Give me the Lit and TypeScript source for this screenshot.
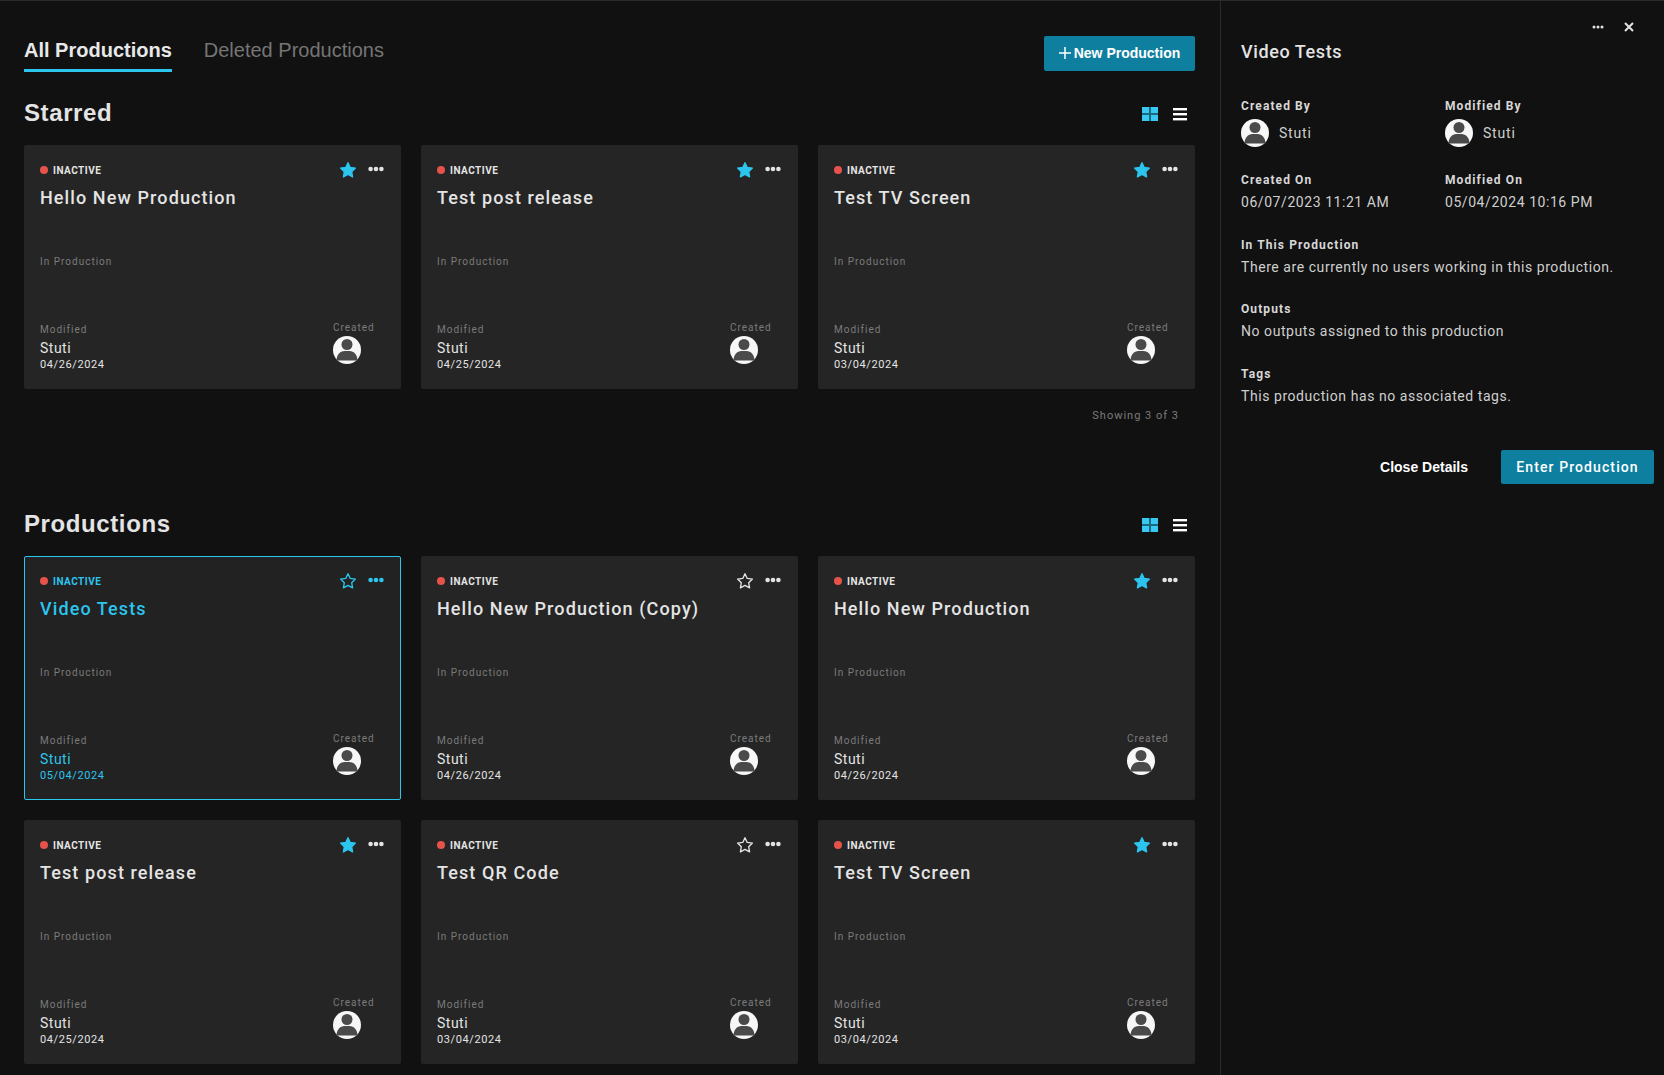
import { LitElement, css, html } from "lit";
import { customElement, property } from "lit/decorators.js";
import { classMap } from "lit/directives/class-map.js";

const starPath =
  "M12 3.2l2.7 5.7 6.2.8-4.5 4.3 1.1 6.2L12 17.2l-5.5 3 1.1-6.2-4.5-4.3 6.2-.8z";

const avatar = html`<svg class="avatar" viewBox="0 0 28 28" aria-hidden="true">
  <circle cx="14" cy="14" r="14" fill="#f7f7f7"></circle>
  <circle cx="14" cy="8.500" r="5.500" fill="#4a4a4a"></circle>
  <path d="M3.500 24.500c0-5.500 3.500-9.500 8-9.500h5c4.500 0 8 4 8 9.500z" fill="#4a4a4a"></path>
</svg>`;

interface Production {
  name: string;
  date: string;
  starred: boolean;
  selected?: boolean;
}

const starred: Production[] = [
  { name: "Hello New Production", date: "04/26/2024", starred: true },
  { name: "Test post release", date: "04/25/2024", starred: true },
  { name: "Test TV Screen", date: "03/04/2024", starred: true },
];

const productions: Production[] = [
  { name: "Video Tests", date: "05/04/2024", starred: false, selected: true },
  { name: "Hello New Production (Copy)", date: "04/26/2024", starred: false },
  { name: "Hello New Production", date: "04/26/2024", starred: true },
  { name: "Test post release", date: "04/25/2024", starred: true },
  { name: "Test QR Code", date: "03/04/2024", starred: false },
  { name: "Test TV Screen", date: "03/04/2024", starred: true },
];

@customElement("production-card")
export class ProductionCard extends LitElement {
  @property({ type: Object }) item!: Production;

  static override styles = css`
    :host {
      display: block;
    }

    .card {
      box-sizing: border-box;
      height: 244px;
      padding: 16px 16px 17px;
      display: flex;
      flex-direction: column;
      background: #252525;
      border-radius: 2px;
      color: #e4e4e4;
    }

    .card.selected {
      padding: 15px 15px 16px;
      background: #222;
      border: 1px solid #2cc5ee;
      color: #2cc5ee;
    }

    .top {
      display: flex;
      align-items: center;
      height: 18px;
    }

    .dot {
      width: 8px;
      height: 8px;
      border-radius: 50%;
      background: #e5534b;
      margin-right: 5px;
    }

    .status {
      font-size: 10px;
      font-weight: 700;
      letter-spacing: 0.5px;
      flex: 1;
    }

    .star {
      width: 20px;
      height: 20px;
      margin-right: 10px;
      fill: none;
      stroke: #e4e4e4;
      stroke-width: 1.600;
      stroke-linejoin: round;
    }

    .selected .star {
      stroke: #2cc5ee;
    }

    .star.on {
      fill: #2cc5ee;
      stroke: #2cc5ee;
    }

    .more {
      width: 16px;
      height: 6px;
      margin: 0 1px 3px 0;
      fill: currentColor;
    }

    .title {
      margin-top: 7px;
      font-size: 18px;
      line-height: 24px;
      font-weight: 500;
      letter-spacing: 1.100px;
    }

    .stage {
      margin-top: 45px;
      font-size: 10px;
      line-height: 14px;
      letter-spacing: 1px;
      color: #7b7b7b;
    }

    .bottom {
      margin-top: auto;
      display: flex;
      justify-content: space-between;
      align-items: flex-end;
    }

    .label {
      font-size: 10px;
      line-height: 14px;
      letter-spacing: 1px;
      color: #7b7b7b;
    }

    .name {
      margin-top: 2px;
      font-size: 14px;
      line-height: 18px;
      letter-spacing: 0.5px;
    }

    .date {
      margin-top: 1px;
      font-size: 11px;
      line-height: 14px;
      letter-spacing: 0.6px;
    }

    .created {
      width: 46px;
      margin-right: 6px;
      margin-bottom: 8px;
    }

    .avatar {
      display: block;
      width: 28px;
      height: 28px;
      margin-top: 1px;
    }
  `;

  override render() {
    const p = this.item;
    return html`<div class=${classMap({ card: true, selected: !!p.selected })}>
      <div class="top">
        <span class="dot"></span>
        <span class="status">INACTIVE</span>
        <svg class=${classMap({ star: true, on: p.starred })} viewBox="0 0 24 24">
          <path d=${starPath}></path>
        </svg>
        <svg class="more" viewBox="0 0 16 6">
          <circle cx="2.600" cy="3" r="2.300"></circle>
          <circle cx="8" cy="3" r="2.300"></circle>
          <circle cx="13.400" cy="3" r="2.300"></circle>
        </svg>
      </div>
      <div class="title">${p.name}</div>
      <div class="stage">In Production</div>
      <div class="bottom">
        <div>
          <div class="label">Modified</div>
          <div class="name">Stuti</div>
          <div class="date">${p.date}</div>
        </div>
        <div class="created">
          <div class="label">Created</div>
          ${avatar}
        </div>
      </div>
    </div>`;
  }
}

@customElement("app-root")
export class AppRoot extends LitElement {
  static override styles = css`
    :host {
      display: block;
      height: 1075px;
      overflow: hidden;
      background: #111;
      color: #e4e4e4;
      font-family: Roboto, "Liberation Sans", sans-serif;
    }

    .page {
      display: flex;
      height: 100%;
      box-sizing: border-box;
      border-top: 1px solid #2a2a2a;
    }

    main {
      box-sizing: border-box;
      width: 1220px;
      flex: none;
      padding: 0 25px 0 24px;
    }

    .tabs {
      display: flex;
      align-items: flex-start;
      padding-top: 35px;
      height: 71px;
      box-sizing: border-box;
    }

    .tab {
      height: 36px;
      margin-right: 32px;
      font-family: "Liberation Sans", sans-serif;
      font-size: 20px;
      line-height: 28px;
      color: #757575;
      box-sizing: border-box;
    }

    .tab.active {
      font-weight: 700;
      color: #e8e8e8;
      border-bottom: 3px solid #2cc5ee;
    }

    .new {
      margin-left: auto;
    }

    .btn {
      display: flex;
      align-items: center;
      justify-content: center;
      border: 0;
      border-radius: 2px;
      background: #0f7f9f;
      color: #fff;
      font: 500 14px Roboto, sans-serif;
    }

    .new.btn {
      width: 151px;
      height: 35px;
      padding: 0 0 2px;
      font: 700 14px "Liberation Sans", sans-serif;
    }

    .new svg {
      width: 12px;
      height: 12px;
      margin-right: 3px;
      stroke: #fff;
      stroke-width: 1.500;
    }

    .head {
      display: flex;
      align-items: center;
      height: 32px;
      margin-bottom: 16px;
      margin-top: 25px;
    }

    .section + .section .head {
      margin-top: 0;
    }

    h2 {
      flex: 1;
      margin: 0;
      font-family: "Liberation Sans", sans-serif;
      font-size: 24px;
      font-weight: 700;
      letter-spacing: 0.6px;
      color: #e4e4e4;
    }

    .view-grid {
      width: 16px;
      height: 14px;
      margin: 1px 15px 0 0;
    }

    .view-list {
      width: 14px;
      height: 14px;
      margin: 1px 8px 0 0;
      fill: #fff;
    }

    .grid {
      display: grid;
      grid-template-columns: repeat(3, 377px);
      gap: 20px;
    }

    .showing {
      height: 76px;
      padding: 19px 16px 0 0;
      box-sizing: border-box;
      margin-bottom: 43px;
      text-align: right;
      font-size: 11px;
      line-height: 16px;
      letter-spacing: 1px;
      color: #7b7b7b;
    }

    aside {
      flex: 1;
      border-left: 1px solid #2a2a2a;
      padding: 0 10px 0 20px;
    }

    .actions {
      display: flex;
      justify-content: flex-end;
      align-items: center;
      gap: 20px;
      height: 52px;
      padding-right: 20px;
    }

    .actions svg {
      display: block;
      fill: #e4e4e4;
    }

    aside h3 {
      margin: -14px 0 0;
      font-size: 18px;
      line-height: 26px;
      font-weight: 500;
      letter-spacing: 0.6px;
    }

    .cols {
      display: grid;
      grid-template-columns: 204px 1fr;
      margin-top: 33px;
      row-gap: 25px;
    }

    .key {
      font-size: 12px;
      line-height: 16px;
      font-weight: 700;
      letter-spacing: 1.100px;
      color: #d8d8d8;
    }

    .val {
      margin-top: 4px;
      font-size: 14px;
      line-height: 20px;
      letter-spacing: 0.56px;
      color: #cfcfcf;
    }

    .who {
      display: flex;
      align-items: center;
      gap: 10px;
      margin-top: 5px;
      font-size: 14px;
      letter-spacing: 0.8px;
      color: #cfcfcf;
    }

    .who svg {
      display: block;
      width: 28px;
      height: 28px;
    }

    .block {
      margin-top: 24px;
    }

    .cols + .block,
    .block.tags {
      margin-top: 25px;
    }

    .foot {
      display: flex;
      align-items: center;
      justify-content: flex-end;
      gap: 33px;
      margin-top: 44px;
    }

    .close {
      font-family: "Liberation Sans", sans-serif;
      font-size: 14px;
      font-weight: 700;
      color: #fff;
    }

    .enter.btn {
      width: 153px;
      height: 34px;
      letter-spacing: 1.100px;
    }
  `;

  private section(title: string, items: Production[]) {
    return html`<div class="head">
        <h2>${title}</h2>
        <svg class="view-grid" viewBox="0 0 16 14">
          <rect width="16" height="14" fill="#1a6a82"></rect>
          <rect width="7" height="6" fill="#38c8f2"></rect>
          <rect x="9" width="7" height="6" fill="#38c8f2"></rect>
          <rect y="8" width="7" height="6" fill="#38c8f2"></rect>
          <rect x="9" y="8" width="7" height="6" fill="#38c8f2"></rect>
        </svg>
        <svg class="view-list" viewBox="0 0 14 14">
          <rect y="1" width="14" height="2.400"></rect>
          <rect y="6" width="14" height="2.400"></rect>
          <rect y="11" width="14" height="2.400"></rect>
        </svg>
      </div>
      <div class="grid">
        ${items.map((item) => html`<production-card .item=${item}></production-card>`)}
      </div>`;
  }

  override render() {
    return html`<div class="page">
      <main>
        <div class="tabs">
          <div class="tab active">All Productions</div>
          <div class="tab">Deleted Productions</div>
          <button class="btn new">
            <svg viewBox="0 0 12 12"><path d="M6 0v12M0 6h12"></path></svg>New Production
          </button>
        </div>
        <div class="section">
          ${this.section("Starred", starred)}
          <div class="showing">Showing 3 of 3</div>
        </div>
        <div class="section">${this.section("Productions", productions)}</div>
      </main>
      <aside>
        <div class="actions">
          <svg width="12" height="4" viewBox="0 0 12 4">
            <circle cx="2" cy="2" r="1.500"></circle>
            <circle cx="6" cy="2" r="1.500"></circle>
            <circle cx="10" cy="2" r="1.500"></circle>
          </svg>
          <svg width="10" height="10" viewBox="0 0 10 10">
            <path d="M1 1l8 8M9 1l-8 8" stroke="#e4e4e4" stroke-width="2"></path>
          </svg>
        </div>
        <h3>Video Tests</h3>
        <div class="cols">
          <div>
            <div class="key">Created By</div>
            <div class="who">${avatar}Stuti</div>
          </div>
          <div>
            <div class="key">Modified By</div>
            <div class="who">${avatar}Stuti</div>
          </div>
          <div>
            <div class="key">Created On</div>
            <div class="val">06/07/2023 11:21 AM</div>
          </div>
          <div>
            <div class="key">Modified On</div>
            <div class="val">05/04/2024 10:16 PM</div>
          </div>
        </div>
        <div class="block">
          <div class="key">In This Production</div>
          <div class="val">There are currently no users working in this production.</div>
        </div>
        <div class="block">
          <div class="key">Outputs</div>
          <div class="val">No outputs assigned to this production</div>
        </div>
        <div class="block tags">
          <div class="key">Tags</div>
          <div class="val">This production has no associated tags.</div>
        </div>
        <div class="foot">
          <span class="close">Close Details</span>
          <button class="btn enter">Enter Production</button>
        </div>
      </aside>
    </div>`;
  }
}

declare global {
  interface HTMLElementTagNameMap {
    "app-root": AppRoot;
    "production-card": ProductionCard;
  }
}
